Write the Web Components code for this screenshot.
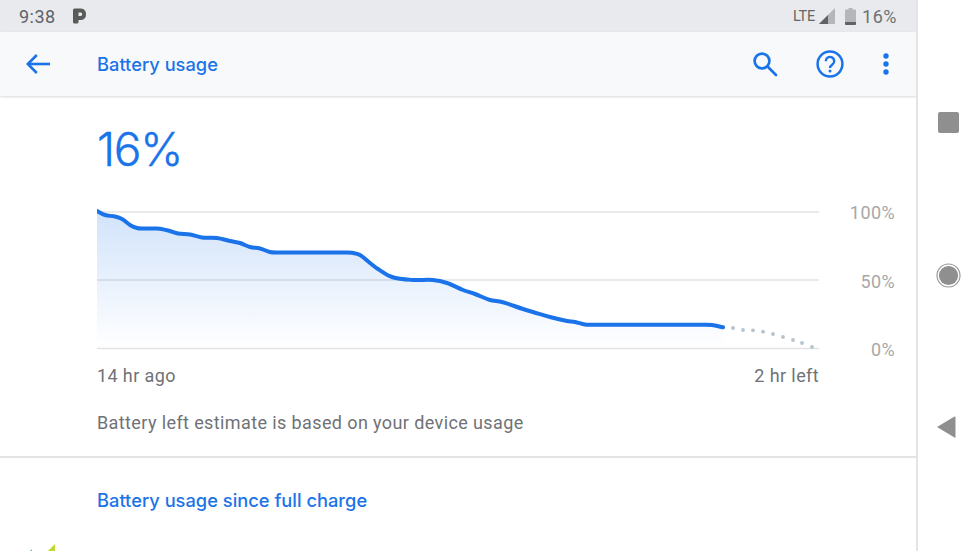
<!DOCTYPE html>
<html>
<head>
<meta charset="utf-8">
<style>
  html, body { margin: 0; height: 100%; overflow: hidden; background: #fff; }
  body { font-family: Roboto, sans-serif; }
</style>
</head>
<body>
<phone-shell>
  <status-bar></status-bar>
  <app-bar title="Battery usage"></app-bar>
  <battery-summary level="16%"></battery-summary>
  <section-title>Battery usage since full charge</section-title>
</phone-shell>
<script>
class PhoneShell extends HTMLElement {
  constructor() {
    super();
    this.shadowDOM = this.attachShadow({ mode: "open" });
    this.shadowDOM.innerHTML = `
      <style>
        :host { display: flex; width: 980px; height: 551px; overflow: hidden; }
        .screen {
          width: 916px;
          flex: none;
          display: flex;
          flex-direction: column;
          overflow: hidden;
          position: relative;
        }
        .nav {
          flex: 1;
          border-left: 2px solid #e3e4e6;
          display: flex;
          flex-direction: column;
          align-items: center;
          padding: 112px 2px 0 0;
        }
        .nav svg { display: block; }
        .home { margin-top: 130px; }
        .back { margin: 128px 3px 0 0; }
        .droid { position: absolute; left: 26px; top: 544px; }
      </style>
      <div class="screen">
        <slot></slot>
        <svg class="droid" width="32" height="7" viewBox="0 0 32 7">
          <path d="M22 7 L29 0 V7 Z" fill="#c0d72f"/>
          <path d="M4 7 L6 5 V7 Z" fill="#5ec8ef"/>
        </svg>
      </div>
      <div class="nav">
        <svg width="21" height="21" viewBox="0 0 21 21"><rect width="21" height="21" rx="2" fill="#8f8f8f"/></svg>
        <svg class="home" width="25" height="25" viewBox="0 0 25 25">
          <circle cx="12.5" cy="12.5" r="11.5" fill="none" stroke="#9a9a9a" stroke-width="1.2"/>
          <circle cx="12.5" cy="12.5" r="9.6" fill="#8f8f8f"/>
        </svg>
        <svg class="back" width="21" height="22" viewBox="0 0 21 22"><path d="M19.5 1 V21 Q19.5 22 18.5 21.4 L1 11 L18.5 .6 Q19.5 0 19.5 1 Z" fill="#8f8f8f"/></svg>
      </div>
    `;
  }
}

class StatusBar extends HTMLElement {
  constructor() {
    super();
    this.shadowDOM = this.attachShadow({ mode: "open" });
    this.shadowDOM.innerHTML = `
      <style>
        :host {
          display: flex;
          align-items: center;
          height: 32px;
          flex: none;
          background: #e8eaed;
          color: #5f6368;
          padding: 0 19px;
          box-sizing: border-box;
        }
        .time { font-size: 18px; letter-spacing: .5px; }
        .p { margin-left: 17px; display: block; }
        .right { margin-left: auto; display: flex; align-items: center; }
        .lte { font-size: 14.5px; letter-spacing: -.2px; color: #666; }
        .level { font-size: 18px; letter-spacing: .5px; margin-left: 6px; color: #6e7175; }
        svg { display: block; }
      </style>
      <span class="time">9:38</span>
      <svg class="p" width="14" height="16" viewBox="0 0 14 16">
        <path fill-rule="evenodd" fill="#5a5a5a" d="M0 2 Q0 .5 1.500 .5 H8 A5.800 5.800 0 0 1 8 12 H5.500 V14 Q5.500 15.500 4 15.500 H1.500 Q0 15.500 0 14 Z M5.500 4.500 V8 H7.800 A1.800 1.800 0 0 0 7.800 4.500 Z"/>
      </svg>
      <div class="right">
        <span class="lte">LTE</span>
        <svg style="margin-left:4px" width="16" height="16" viewBox="0 0 16 16">
          <path d="M0 16 L16 0 V16 Z" fill="#b4b6b9"/>
          <path d="M0 16 L9 7 V16 Z" fill="#5f6368"/>
        </svg>
        <svg style="margin-left:10px" width="11" height="17" viewBox="0 0 11 17">
          <path d="M3.500 0 H7.500 V1.500 H10 Q11 1.500 11 2.500 V16 Q11 17 10 17 H1 Q0 17 0 16 V2.500 Q0 1.500 1 1.500 H3.500 Z" fill="#b4b6b9"/>
          <path d="M0 14 H11 V16 Q11 17 10 17 H1 Q0 17 0 16 Z" fill="#5f6368"/>
        </svg>
        <span class="level">16%</span>
      </div>
    `;
  }
}

class AppBar extends HTMLElement {
  constructor() {
    super();
    this.shadowDOM = this.attachShadow({ mode: "open" });
  }

  connectedCallback() {
    this.render();
  }

  render() {
    this.shadowDOM.innerHTML = `
      <style>
        :host {
          display: flex;
          align-items: center;
          height: 64px;
          flex: none;
          background: #f8f9fa;
          box-shadow: 0 1px 2px rgba(60,64,67,.2);
          position: relative;
          color: #1a73e8;
        }
        .back { margin-left: 26px; display: block; }
        h1 {
          margin: 1px 0 0 46px;
          font: 500 18.300px/1 Inter, Roboto, sans-serif;
        }
        .actions { margin-left: auto; display: flex; align-items: center; padding-right: 26px; }
        .actions svg { display: block; }
      </style>
      <svg class="back" width="25" height="22" viewBox="0 0 25 22" fill="none" stroke="#1a73e8" stroke-width="2.600">
        <path d="M2 11 H24"/>
        <path d="M10.800 2 L1.800 11 L10.800 20"/>
      </svg>
      <h1>${this.getAttribute("title")}</h1>
      <div class="actions">
        <svg width="26" height="26" viewBox="0 0 26 26" fill="none" stroke="#1a73e8" stroke-width="2.700" stroke-linecap="round">
          <circle cx="10" cy="10" r="7.400"/>
          <path d="M15.500 15.500 L24 24"/>
        </svg>
        <svg style="margin-left:38px" width="28" height="28" viewBox="0 0 28 28" fill="none" stroke="#1a73e8">
          <circle cx="14" cy="14" r="12.400" stroke-width="2.500"/>
          <path d="M9.800 11.200 A4.200 4.200 0 1 1 16.400 14.600 C14.800 15.700 14 16.300 14 18" stroke-width="2.400"/>
          <circle cx="14" cy="21" r="1.500" fill="#1a73e8" stroke="none"/>
        </svg>
        <svg style="margin-left:38px" width="8" height="24" viewBox="0 0 8 24" fill="#1a73e8">
          <circle cx="4" cy="4" r="2.700"/>
          <circle cx="4" cy="12" r="2.700"/>
          <circle cx="4" cy="20" r="2.700"/>
        </svg>
      </div>
    `;
  }
}

class BatteryChart extends HTMLElement {
  constructor() {
    super();
    this.shadowDOM = this.attachShadow({ mode: "open" });
    // points read off the screen, moved so 0,0 is the svg corner
    const pts = [[97,211],[105,215],[115,216.5],[122,219],[130,225],[137,228],[143,228.5],[155,228.5],[160,228.7],[170,231],[178,233.5],[190,234.5],[202,237.5],[217,238],[230,241],[240,243],[250,247],[260,248.500],[270,252],[276,252.500],[346,252.500],[352,252.800],[360,255],[370,263],[378,269],[392,277],[413,280],[433,280],[447,283],[463,290],[475,294],[490,300],[502,302],[523,309],[533,312],[550,317],[567,321],[575,322],[585,324.500],[592,324.700],[705,324.700],[712,325],[723,327.300]]
      .map(([x, y]) => [x - 97, y - 205]);
    const dots = [[733,328],[743,330],[753,330.300],[763,331.700],[773,334],[783,337],[793,340],[802,343],[812,347]]
      .map(([x, y]) => [x - 97, y - 205]);
    const curve = this.smooth(pts);
    this.shadowDOM.innerHTML = `
      <style>
        :host {
          display: grid;
          grid-template-columns: 722px 1fr;
          width: 798px;
          color: #5f6368;
        }
        svg { display: block; }
        .marks {
          display: flex;
          flex-direction: column;
          align-items: flex-end;
          justify-content: space-between;
          height: 158px;
          margin-top: -3px;
          font-size: 18px;
          line-height: 21px;
          color: #a8a8a8;
          letter-spacing: .4px;
        }
        .times {
          grid-column: 1;
          display: flex;
          justify-content: space-between;
          font-size: 18px;
          line-height: 21px;
          letter-spacing: .39px;
          color: #6f7276;
          margin-top: 5px;
        }
      </style>
      <svg width="722" height="148" viewBox="0 0 722 148">
        <defs>
          <linearGradient id="fade" x1="0" y1="0" x2="0" y2="1">
            <stop offset="0" stop-color="#1a73e8" stop-opacity=".2"/>
            <stop offset="1" stop-color="#1a73e8" stop-opacity="0"/>
          </linearGradient>
        </defs>
        <path d="M0,143 L${curve.slice(1)} L626,143 Z" fill="url(#fade)"/>
        <g stroke="#000" stroke-opacity=".11" stroke-width="1.500">
          <path d="M0 7 H722"/>
          <path d="M0 75 H722"/>
          <path d="M0 143.500 H722"/>
        </g>
        <path d="${curve}" fill="none" stroke="#1a73e8" stroke-width="4" stroke-linecap="round" stroke-linejoin="round"/>
        ${dots.map(([x, y]) => `<circle cx="${x}" cy="${y}" r="1.900" fill="#b4c3cc"/>`).join("")}
      </svg>
      <div class="marks"><span>100%</span><span>50%</span><span>0%</span></div>
      <div class="times"><span>14 hr ago</span><span>2 hr left</span></div>
    `;
  }

  // handles are as long as a third of their own segment, so short steps next to long flats don't overshoot
  smooth(pts) {
    const dir = (a, b) => {
      const len = Math.hypot(b[0] - a[0], b[1] - a[1]) || 1;
      return [(b[0] - a[0]) / len, (b[1] - a[1]) / len];
    };
    let d = `M${pts[0][0]},${pts[0][1]}`;
    for (let i = 0; i < pts.length - 1; i++) {
      const b = pts[i];
      const c = pts[i + 1];
      const t1 = dir(pts[i - 1] || b, c);
      const t2 = dir(b, pts[i + 2] || c);
      const h = Math.hypot(c[0] - b[0], c[1] - b[1]) / 3;
      d += ` C${b[0] + t1[0] * h},${b[1] + t1[1] * h} ${c[0] - t2[0] * h},${c[1] - t2[1] * h} ${c[0]},${c[1]}`;
    }
    return d;
  }
}

class BatterySummary extends HTMLElement {
  constructor() {
    super();
    this.shadowDOM = this.attachShadow({ mode: "open" });
  }

  connectedCallback() {
    this.shadowDOM.innerHTML = `
      <style>
        :host {
          display: block;
          flex: none;
          height: 362px;
          padding-left: 97px;
          box-sizing: border-box;
          border-bottom: 2px solid #e3e4e6;
        }
        .level {
          font: 300 46px/56px Inter, Roboto, sans-serif;
          letter-spacing: -1.300px;
          -webkit-text-stroke: .4px #1a73e8;
          color: #1a73e8;
          padding-top: 25px;
          margin-bottom: 28px;
        }
        p {
          margin: 26px 0 0;
          font-size: 18px;
          line-height: 21px;
          letter-spacing: .39px;
          color: #6f7276;
        }
      </style>
      <div class="level">${this.getAttribute("level")}</div>
      <battery-chart></battery-chart>
      <p>Battery left estimate is based on your device usage</p>
    `;
  }
}

class SectionTitle extends HTMLElement {
  constructor() {
    super();
    this.shadowDOM = this.attachShadow({ mode: "open" });
    this.shadowDOM.innerHTML = `
      <style>
        :host {
          display: block;
          flex: none;
          padding: 32px 0 0 97px;
          font: 500 18.300px/21px Inter, Roboto, sans-serif;
          color: #1a73e8;
        }
      </style>
      <slot></slot>
    `;
  }
}

customElements.define("phone-shell", PhoneShell);
customElements.define("status-bar", StatusBar);
customElements.define("app-bar", AppBar);
customElements.define("battery-chart", BatteryChart);
customElements.define("battery-summary", BatterySummary);
customElements.define("section-title", SectionTitle);
</script>
</body>
</html>
